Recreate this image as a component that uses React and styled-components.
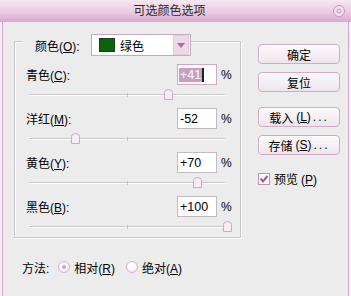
import React from "react";
import styled, { createGlobalStyle } from "styled-components";

const GlobalStyle = createGlobalStyle`
  body {
    margin: 0;
    background: #ececec;
    font-family: "Liberation Sans", "Noto Sans CJK SC", sans-serif;
    font-size: 12px;
    color: #000;
  }
`;

const Window = styled.div`
  width: 351px;
  height: 296px;
  display: flex;
  flex-direction: column;
  background: #f6eff5;
  overflow: hidden;
`;

const TitleBar = styled.div`
  height: 22px;
  display: flex;
  align-items: center;
  padding: 0 6px;
  background: linear-gradient(#f6e8f3 0%, #eacbe2 55%, #d9a8ce 100%);
`;

const Title = styled.div`
  flex: 1;
  text-align: center;
  color: #2a2a2a;
  line-height: 22px;
`;

const Body = styled.div`
  flex: 1;
  margin: 0 2px;
  border-left: 1px solid #d6a8cc;
  border-right: 1px solid #d6a8cc;
  background: #ececec;
  padding: 19px 0 0 11px;
`;

const Main = styled.div`
  display: flex;
  align-items: flex-start;
`;

const Group = styled.div`
  width: 227px;
  box-sizing: border-box;
  border: 1px solid #c9c5c8;
  box-shadow: inset 1px 1px 0 #fff, 1px 1px 0 #fff;
`;

const Header = styled.div`
  display: flex;
  align-items: center;
  width: fit-content;
  margin: -8px 0 0 8px;
  padding-left: 12px;
  background: #ececec;
`;

const HeaderLabel = styled.span`
  width: 56px;
`;

const Key = styled.u`
  text-underline-offset: 1px;
`;

const Dropdown = styled.div`
  width: 100px;
  height: 22px;
  box-sizing: border-box;
  border: 1px solid #c6a9c1;
  background: #fff;
  display: flex;
  align-items: center;
`;

const Swatch = styled.span`
  width: 16px;
  height: 14px;
  box-sizing: border-box;
  margin-left: 7px;
  background: ${p => p.color};
  border: 1px solid #1d3a1d;
`;

const DropText = styled.span`
  margin-left: 5px;
`;

const DropButton = styled.span`
  margin-left: auto;
  margin-right: 1px;
  width: 14px;
  height: 18px;
  background: #ecd8e8;
  border: 1px solid #e4cbe0;
  display: flex;
  align-items: center;
  justify-content: center;
`;

const Rows = styled.div`
  margin-top: 8px;
  display: flex;
  flex-direction: column;
  gap: 3px;
`;

const Row = styled.div`
  display: flex;
  flex-direction: column;
`;

const InputRow = styled.div`
  height: 21px;
  display: flex;
  align-items: center;
  padding-left: 11px;
`;

const Label = styled.span`
  flex: 1;
`;

const ValueBox = styled.div`
  width: 40px;
  height: 21px;
  box-sizing: border-box;
  border: 1px solid ${p => (p.focused ? "#cfa9c8" : "#c2bcc0")};
  background: #fff;
  display: flex;
  align-items: center;
  padding-left: 1px;
  font-size: 12.5px;
`;

const Selected = styled.span`
  background: #c99ec4;
  color: #fff;
  padding: 0 1px;
  line-height: 14px;
`;

const Caret = styled.span`
  width: 2px;
  height: 14px;
  background: #222;
`;

const Plain = styled.span`
  padding-left: 1px;
`;

const Pct = styled.span`
  width: 23px;
  padding-left: 4px;
  box-sizing: border-box;
`;

const SliderBlock = styled.div`
  height: 20px;
  padding-left: 13px;
`;

const Track = styled.div`
  position: relative;
  width: 199px;
  height: 20px;

  &::before {
    content: "";
    position: absolute;
    left: 1px;
    right: 2px;
    top: 9px;
    height: 1px;
    background: #cbc7ca;
    box-shadow: 0 1px 0 #fff;
  }
`;

const Tick = styled.span`
  position: absolute;
  left: 99px;
  top: 8px;
  width: 1px;
  height: 4px;
  background: #c4c0c3;
`;

const Thumb = styled.svg`
  position: absolute;
  top: 4px;
`;

const Side = styled.div`
  margin: 3px 0 0 17px;
  display: flex;
  flex-direction: column;
`;

const ButtonGroup = styled.div`
  display: flex;
  flex-direction: column;
  gap: 8px;
  margin-top: ${p => p.offset || 0}px;
`;

const Button = styled.div`
  width: 82px;
  height: 20px;
  box-sizing: border-box;
  border: 1px solid #cfaac9;
  border-radius: 4px;
  background: linear-gradient(#fbf8fa, #efe6ed);
  box-shadow: inset 1px 1px 0 #fff;
  display: flex;
  align-items: center;
  justify-content: center;
`;

const Dots = styled.span`
  letter-spacing: 2px;
  margin-left: 2px;
`;

const Paren = styled.span`
  margin-left: 3px;
`;

const CheckRow = styled.div`
  margin-top: 15px;
  display: flex;
  align-items: center;
  gap: 4px;
`;

const CheckBox = styled.span`
  width: 12px;
  height: 12px;
  box-sizing: border-box;
  border: 1px solid #b89ab2;
  background: #fff;
  display: flex;
  align-items: center;
  justify-content: center;
`;

const Footer = styled.div`
  margin: 21px 0 0 8px;
  height: 16px;
  display: flex;
  align-items: center;
`;

const MethodLabel = styled.span`
  margin-right: 9px;
`;

const RadioOption = styled.label`
  display: flex;
  align-items: center;
  gap: 4px;
  margin-right: 11px;
`;

const Radio = styled.span`
  width: 12px;
  height: 12px;
  box-sizing: border-box;
  border-radius: 50%;
  border: 1px solid #d3b3cd;
  background: radial-gradient(circle at 40% 40%, #fff 30%, #eddde9 100%);
  display: flex;
  align-items: center;
  justify-content: center;

  &::after {
    content: "";
    width: 4px;
    height: 4px;
    border-radius: 50%;
    background: ${p => (p.checked ? "#dc98d1" : "transparent")};
  }
`;

const channels = [
  { name: "青色", key: "C", value: 41, focused: true },
  { name: "洋红", key: "M", value: -52 },
  { name: "黄色", key: "Y", value: 70 },
  { name: "黑色", key: "B", value: 100 }
];

const fmt = v => (v > 0 ? `+${v}` : `${v}`);

const SliderThumb = ({ value }) => {
  const center = ((value + 100) / 200) * 199;
  return (
    <Thumb width="9" height="11" viewBox="0 0 9 11" style={{ left: center - 4.5 }}>
      <path
        d="M0.5 10.5 V3.5 Q0.5 2 2 1.2 L4.5 0.5 L7 1.2 Q8.5 2 8.5 3.5 V10.5 Z"
        fill="#f6ecf4"
        stroke="#c9abc4"
      />
    </Thumb>
  );
};

const ChannelRow = ({ channel }) => (
  <Row>
    <InputRow>
      <Label>
        {channel.name}(<Key>{channel.key}</Key>):
      </Label>
      <ValueBox focused={channel.focused}>
        {channel.focused ? (
          <>
            <Selected>{fmt(channel.value)}</Selected>
            <Caret />
          </>
        ) : (
          <Plain>{fmt(channel.value)}</Plain>
        )}
      </ValueBox>
      <Pct>%</Pct>
    </InputRow>
    <SliderBlock>
      <Track>
        <Tick />
        <SliderThumb value={channel.value} />
      </Track>
    </SliderBlock>
  </Row>
);

export default function App() {
  return (
    <Window>
      <GlobalStyle />
      <TitleBar>
        <Title>可选颜色选项</Title>
        <svg width="12" height="12" viewBox="0 0 12 12">
          <circle cx="6" cy="6" r="5.5" fill="#f2e0ee" stroke="#c792bd" />
          <circle cx="6" cy="6" r="2" fill="none" stroke="#c792bd" />
        </svg>
      </TitleBar>
      <Body>
        <Main>
          <Group>
            <Header>
              <HeaderLabel>
                颜色(<Key>O</Key>):
              </HeaderLabel>
              <Dropdown>
                <Swatch color="#0b650b" />
                <DropText>绿色</DropText>
                <DropButton>
                  <svg width="8" height="5" viewBox="0 0 8 5">
                    <path d="M0 0 H8 L4 5 Z" fill="#b46aa9" />
                  </svg>
                </DropButton>
              </Dropdown>
            </Header>
            <Rows>
              {channels.map(c => (
                <ChannelRow key={c.key} channel={c} />
              ))}
            </Rows>
          </Group>
          <Side>
            <ButtonGroup>
              <Button>确定</Button>
              <Button>复位</Button>
            </ButtonGroup>
            <ButtonGroup offset={15}>
              <Button>
                载入<Paren>(<Key>L</Key>)</Paren>
                <Dots>...</Dots>
              </Button>
              <Button>
                存储<Paren>(<Key>S</Key>)</Paren>
                <Dots>...</Dots>
              </Button>
            </ButtonGroup>
            <CheckRow>
              <CheckBox>
                <svg width="10" height="10" viewBox="0 0 10 10">
                  <path d="M1.5 4.5 L4 7.5 L8.5 2" fill="none" stroke="#a4569a" strokeWidth="2" />
                </svg>
              </CheckBox>
              <span>
                预览<Paren>(<Key>P</Key>)</Paren>
              </span>
            </CheckRow>
          </Side>
        </Main>
        <Footer>
          <MethodLabel>方法:</MethodLabel>
          <RadioOption>
            <Radio checked />
            <span>
              相对(<Key>R</Key>)
            </span>
          </RadioOption>
          <RadioOption>
            <Radio />
            <span>
              绝对(<Key>A</Key>)
            </span>
          </RadioOption>
        </Footer>
      </Body>
    </Window>
  );
}
